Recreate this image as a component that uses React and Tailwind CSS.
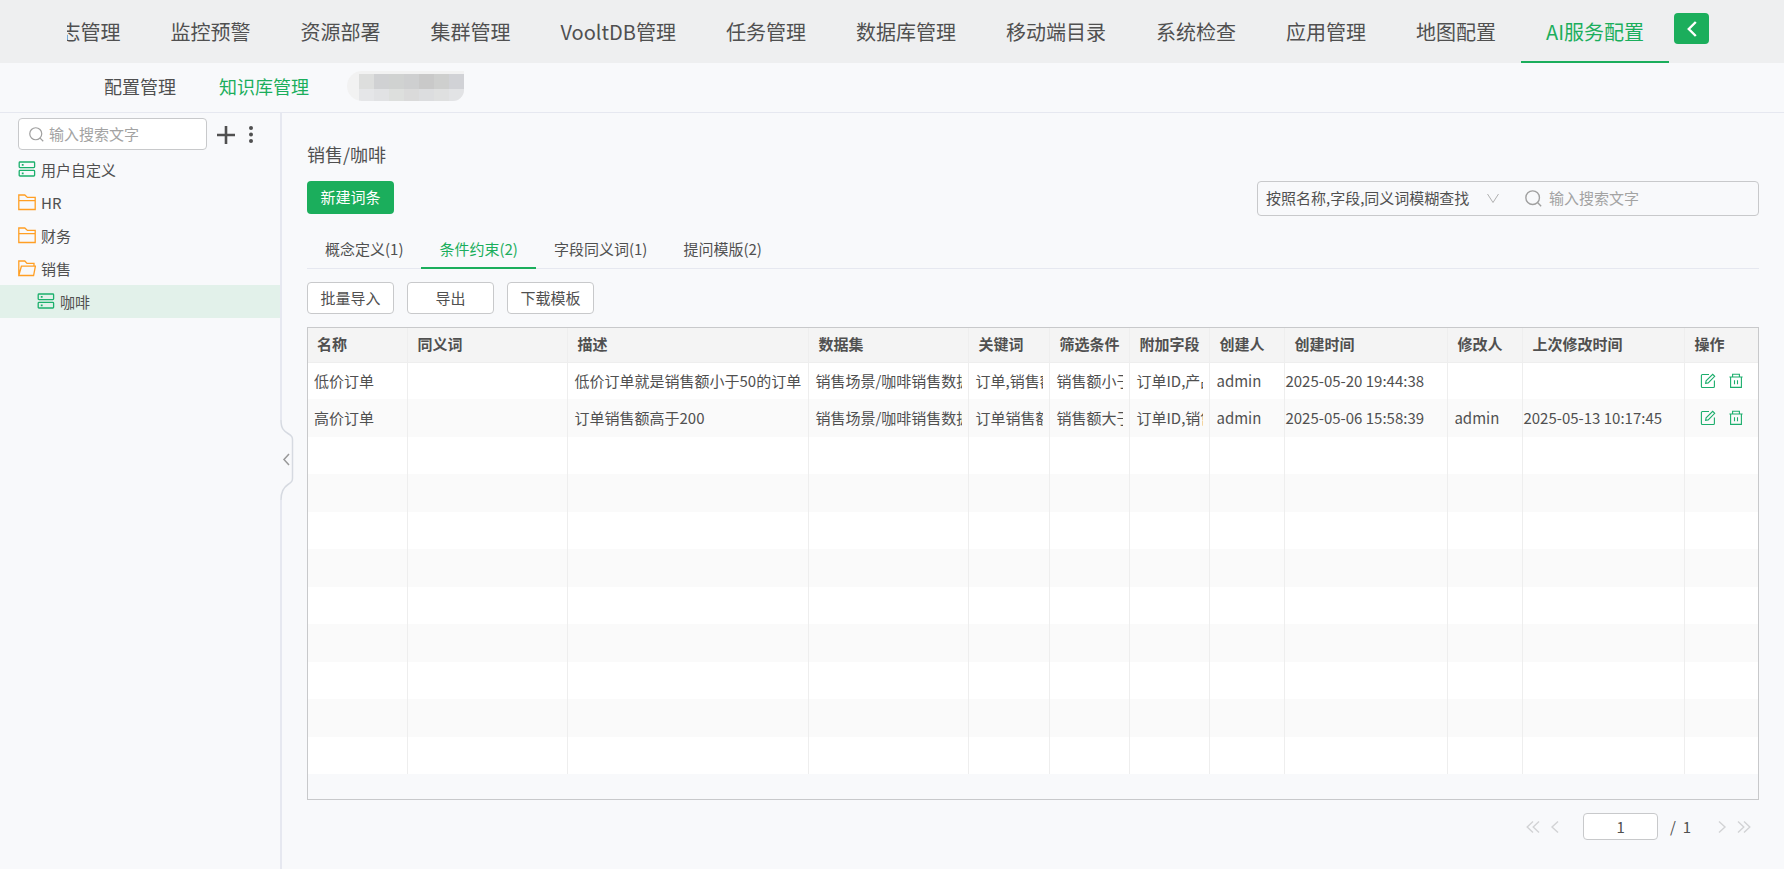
import { useState } from "react";

const navItems = [
  "日志管理",
  "监控预警",
  "资源部署",
  "集群管理",
  "VooltDB管理",
  "任务管理",
  "数据库管理",
  "移动端目录",
  "系统检查",
  "应用管理",
  "地图配置",
  "AI服务配置",
];

const tabs = ["概念定义(1)", "条件约束(2)", "字段同义词(1)", "提问模版(2)"];

const columns = [
  { title: "名称", key: "name", width: 100 },
  { title: "同义词", key: "synonym", width: 160 },
  { title: "描述", key: "desc", width: 241 },
  { title: "数据集", key: "dataset", width: 160 },
  { title: "关键词", key: "keyword", width: 81 },
  { title: "筛选条件", key: "filter", width: 80 },
  { title: "附加字段", key: "extra", width: 80 },
  { title: "创建人", key: "creator", width: 75 },
  { title: "创建时间", key: "createdAt", width: 163, time: true },
  { title: "修改人", key: "editor", width: 75 },
  { title: "上次修改时间", key: "updatedAt", width: 162, time: true },
  { title: "操作", key: "action", width: 73 },
];

const rows = [
  {
    name: "低价订单",
    desc: "低价订单就是销售额小于50的订单",
    dataset: "销售场景/咖啡销售数据",
    keyword: "订单,销售额",
    filter: "销售额小于",
    extra: "订单ID,产品",
    creator: "admin",
    createdAt: "2025-05-20 19:44:38",
  },
  {
    name: "高价订单",
    desc: "订单销售额高于200",
    dataset: "销售场景/咖啡销售数据",
    keyword: "订单销售额",
    filter: "销售额大于",
    extra: "订单ID,销售",
    creator: "admin",
    createdAt: "2025-05-06 15:58:39",
    editor: "admin",
    updatedAt: "2025-05-13 10:17:45",
  },
];

const totalRows = 11;

const mosaicTop = ["bg-[#dddedd]", "bg-[#d0d1d3]", "bg-[#d0d2d1]", "bg-[#cecfd0]", "bg-[#c9c9c9]", "bg-[#cecfce]", "bg-[#d1d2d6]"];
const mosaicBottom = ["bg-[#e5e6e8]", "bg-[#e1e2e4]", "bg-[#dddfdd]", "bg-[#dadada]", "bg-[#dcdddf]", "bg-[#dfe0e0]", "bg-[#e2e3e5]"];

function SearchIcon({ className }) {
  return (
    <svg className={className} viewBox="0 0 16 16" fill="none" stroke="currentColor" strokeWidth="1.3">
      <circle cx="7.2" cy="7.2" r="6.4" />
      <path d="M11.8 11.8l3.4 3.4" />
    </svg>
  );
}

function DatasetIcon() {
  return (
    <svg className="w-[18px] h-[18px] shrink-0 text-[#1bb06c]" viewBox="0 0 18 18" fill="none" stroke="currentColor" strokeWidth="1.3">
      <rect x="1.2" y="1" width="15.4" height="5.6" rx="0.8" />
      <rect x="1.2" y="9.4" width="15.4" height="5.6" rx="0.8" />
      <path d="M3.8 3.9h1.8M3.8 12.3h1.8" strokeWidth="1.8" />
    </svg>
  );
}

function FolderIcon({ open }) {
  return (
    <svg className="w-[18px] h-[18px] shrink-0 text-[#ff9f24]" viewBox="0 0 18 18" fill="none" stroke="currentColor" strokeWidth="1.3">
      {open ? (
        <path d="M0.8 15.5V1h6l2.2 2.4h7v2.8M0.8 15.5L3.4 6.2h14L15.6 15.5z" />
      ) : (
        <path d="M0.8 1h6l2.6 2.4h7.8v12.1H0.8zM0.8 6.6h16.4" />
      )}
    </svg>
  );
}

function EditIcon() {
  return (
    <svg className="w-4 h-4" viewBox="0 0 16 16" fill="none" stroke="currentColor" strokeWidth="1.1">
      <path d="M9 1.5H2.4a1 1 0 0 0-1 1v11a1 1 0 0 0 1 1h11a1 1 0 0 0 1-1V7.6" />
      <path d="M5.6 10.4l.5-2.6L12.7 1.3l2 2L8.2 9.9z" />
    </svg>
  );
}

function TrashIcon() {
  return (
    <svg className="w-4 h-4" viewBox="0 0 16 16" fill="none" stroke="currentColor" strokeWidth="1.1">
      <path d="M1.4 4h13.2M4.6 4V1.2h6.8V4M2.6 4v10.4h10.8V4M6.5 7.2v4M9.5 7.2v4" />
    </svg>
  );
}

function Chevron({ double, right }) {
  return (
    <svg
      className={right ? "h-3 w-[14px] rotate-180" : "h-3 w-[14px]"}
      viewBox="0 0 14 12"
      fill="none"
      stroke="currentColor"
      strokeWidth="1.4"
    >
      {double ? <path d="M7 .5L1.2 6 7 11.5M13 .5L7.2 6l5.8 5.5" /> : <path d="M10 .5L4 6l6 5.5" />}
    </svg>
  );
}

function TreeItem({ icon, label, active, nested }) {
  return (
    <li>
      <button
        className={`flex items-center gap-[5px] w-full h-[33px] ${nested ? "pl-[37px]" : "pl-[18px]"} ${
          active ? "bg-[#e2f1ea]" : ""
        }`}
      >
        {icon}
        {label}
      </button>
    </li>
  );
}

function Header() {
  return (
    <header>
      <div className="flex h-[63px] pl-[67px] pr-[75px] bg-[#eeeff0]">
        <nav className="flex flex-1 justify-end overflow-hidden text-xl">
          {navItems.map((item) => (
            <a
              key={item}
              href="#"
              className={`shrink-0 px-[25px] leading-[63px] whitespace-nowrap ${
                item === "AI服务配置" ? "text-[#1bae5c] border-b-2 border-[#1bae5c]" : ""
              }`}
            >
              {item}
            </a>
          ))}
        </nav>
        <button
          aria-label="收起"
          className="flex items-center justify-center w-[35px] h-[31px] mt-[13px] ml-[5px] rounded bg-[#1bae5c] text-white"
        >
          <svg className="w-[10px] h-4" viewBox="0 0 10 16" fill="none" stroke="currentColor" strokeWidth="2.4">
            <path d="M8.8 1L1.8 8l7 7" />
          </svg>
        </button>
      </div>

      {/* Second level */}
      <div className="flex items-center h-[50px] pl-[104px] pb-[3px] border-b border-[#e6e8f0] text-lg">
        <a href="#">配置管理</a>
        <a href="#" className="ml-[43px] text-[#1bae5c]">
          知识库管理
        </a>
        <div className="flex w-[117px] h-[30px] ml-[38px] rounded-l-2xl rounded-br-xl overflow-hidden bg-[#f2f2f2]">
          <div className="w-3" />
          <div className="flex flex-col flex-1 pt-[3px]">
            <div className="flex h-[15px]">
              {mosaicTop.map((color) => (
                <div key={color} className={`flex-1 ${color}`} />
              ))}
            </div>
            <div className="flex flex-1">
              {mosaicBottom.map((color) => (
                <div key={color} className={`flex-1 ${color}`} />
              ))}
            </div>
          </div>
        </div>
      </div>
    </header>
  );
}

function Sidebar() {
  return (
    <aside className="relative w-[282px] shrink-0 border-r-2 border-[#e6e8f0]">
      <div className="flex items-center pl-[18px] pt-[5px]">
        <label className="flex items-center gap-[5px] w-[189px] h-8 px-[10px] rounded border border-[#c8c9cb] bg-white">
          <SearchIcon className="w-[15px] h-[15px] shrink-0 text-[#a0a0a0]" />
          <input
            aria-label="搜索知识库"
            placeholder="输入搜索文字"
            className="w-full min-w-0 bg-transparent outline-none placeholder:text-[#a3a3a3]"
          />
        </label>
        <button aria-label="新建" className="ml-[9px]">
          <svg className="w-5 h-5" viewBox="0 0 20 20" stroke="currentColor" strokeWidth="2.6">
            <path d="M1 11h18M10 2v18" />
          </svg>
        </button>
        <button aria-label="更多" className="ml-2">
          <svg className="w-[14px] h-5" viewBox="0 0 14 20" fill="currentColor">
            <circle cx="7" cy="4" r="2" />
            <circle cx="7" cy="10.5" r="2" />
            <circle cx="7" cy="17" r="2" />
          </svg>
        </button>
      </div>

      <ul className="mt-[3px]">
        <TreeItem icon={<DatasetIcon />} label="用户自定义" />
        <TreeItem icon={<FolderIcon />} label="HR" />
        <TreeItem icon={<FolderIcon />} label="财务" />
        <TreeItem icon={<FolderIcon open />} label="销售" />
        <TreeItem icon={<DatasetIcon />} label="咖啡" active nested />
      </ul>

      {/* Collapse handle, sits on the divider */}
      <button aria-label="收起侧栏" className="absolute top-[307px] -right-[16px]">
        <svg className="w-4 h-20" viewBox="0 0 16 80" fill="none">
          <path d="M0 0h2c0 9 2 11 6 13.5s5 3.500 5 6.500v38c0 3-1 4-5 6.500S2 71 2 80H0z" fill="#f8f9fb" />
          <path
            d="M1 0c0 9 3 11 7 13.500s4.500 3.500 4.500 6.500v38c0 3-.5 4-4.500 6.500S1 71 1 80"
            stroke="#d6dae1"
            strokeWidth="1.5"
          />
          <path d="M9 34l-5 5.500L9 45" stroke="#999999" strokeWidth="1.5" />
        </svg>
      </button>
    </aside>
  );
}

function EntryTable() {
  const total = columns.reduce((sum, col) => sum + col.width, 0);

  return (
    <div className="mt-[13px] pb-[25px] border border-[#c8c9cb]">
      <table className="w-full h-[446px] table-fixed border-collapse bg-white">
        <colgroup>
          {columns.map((col) => (
            <col key={col.key} style={{ width: `${(col.width / total) * 100}%` }} />
          ))}
        </colgroup>
        <thead>
          <tr className="h-[34px] bg-[#f4f4f4] border-b border-[#eeeeee]">
            {columns.map((col) => (
              <th
                key={col.key}
                className="pl-[9px] pb-px text-left font-bold whitespace-nowrap border-r border-[#eeeeee] last:border-r-0"
              >
                {col.title}
              </th>
            ))}
          </tr>
        </thead>
        <tbody>
          {Array.from({ length: totalRows }, (_, i) => (
            <tr key={i} className="h-[37px] even:bg-[#fafafa]">
              {columns.map((col) => (
                <td
                  key={col.key}
                  className={`border-r border-[#eeeeee] last:border-r-0 ${col.time ? "" : "px-[6px]"}`}
                >
                  {col.key === "action" && rows[i] ? (
                    <div className="flex gap-3 pl-[9px] text-[#1bae6c]">
                      <button aria-label="编辑">
                        <EditIcon />
                      </button>
                      <button aria-label="删除">
                        <TrashIcon />
                      </button>
                    </div>
                  ) : (
                    <div className="overflow-hidden whitespace-nowrap">{rows[i]?.[col.key]}</div>
                  )}
                </td>
              ))}
            </tr>
          ))}
        </tbody>
      </table>
    </div>
  );
}

function Pagination() {
  const [page, setPage] = useState("1");

  return (
    <div className="flex items-center justify-end mt-[13px] pr-2 text-[#d2d3d5]">
      <button aria-label="首页">
        <Chevron double />
      </button>
      <button aria-label="上一页" className="ml-2">
        <Chevron />
      </button>
      <input
        aria-label="页码"
        value={page}
        onChange={(e) => setPage(e.target.value)}
        className="w-[75px] h-[27px] ml-[21px] rounded border border-[#c8c9cb] bg-white text-center text-[#505050] outline-none"
      />
      <span className="ml-3 text-[#505050] whitespace-pre">/  1</span>
      <button aria-label="下一页" className="ml-6">
        <Chevron right />
      </button>
      <button aria-label="末页" className="ml-2">
        <Chevron double right />
      </button>
    </div>
  );
}

export default function App() {
  const [activeTab, setActiveTab] = useState(1);

  return (
    <div className="flex flex-col min-h-screen bg-[#f8f9fb] text-[#505050] text-[15px] leading-[22px] font-['Noto_Sans_CJK_SC',sans-serif]">
      <Header />

      <div className="flex flex-1">
        <Sidebar />

        <main className="flex-1 min-w-0 px-[25px] pt-[29px]">
          <h1 className="text-lg leading-6">销售/咖啡</h1>

          <div className="flex items-start justify-between mt-[15px]">
            <button className="w-[87px] h-[33px] pb-px rounded bg-[#1bae5c] text-white">新建词条</button>

            {/* Search */}
            <div className="flex items-center w-[502px] h-[35px] rounded border border-[#c8c9cb]">
              <div className="relative flex items-center">
                <select
                  aria-label="查找方式"
                  className="w-[252px] h-[33px] pl-2 pb-px appearance-none bg-transparent outline-none"
                >
                  <option>按照名称,字段,同义词模糊查找</option>
                </select>
                <svg
                  className="absolute right-[11px] w-3 h-3 pointer-events-none text-[#b0b0b0]"
                  viewBox="0 0 12 12"
                  fill="none"
                  stroke="currentColor"
                >
                  <path d="M.5 1L6 9.500 11.500 1" />
                </svg>
              </div>
              <label className="flex flex-1 items-center gap-[7px] pl-[15px]">
                <SearchIcon className="w-[17px] h-[17px] shrink-0 text-[#a0a0a0]" />
                <input
                  aria-label="搜索词条"
                  placeholder="输入搜索文字"
                  className="w-full min-w-0 pb-px bg-transparent outline-none placeholder:text-[#a3a3a3]"
                />
              </label>
            </div>
          </div>

          {/* Tabs */}
          <div className="flex mt-4 border-b border-[#e6e8f0]">
            {tabs.map((tab, i) => (
              <button
                key={tab}
                onClick={() => setActiveTab(i)}
                className={`h-[37px] px-[18px] pb-0.5 -mb-px border-b-2 ${
                  i === activeTab ? "text-[#1bae5c] border-[#1bae5c]" : "border-transparent"
                }`}
              >
                {tab}
              </button>
            ))}
          </div>

          <div className="flex gap-[13px] mt-[13px]">
            {["批量导入", "导出", "下载模板"].map((label) => (
              <button key={label} className="w-[87px] h-8 rounded border border-[#c8c9cb] bg-white">
                {label}
              </button>
            ))}
          </div>

          <EntryTable />
          <Pagination />
        </main>
      </div>
    </div>
  );
}
